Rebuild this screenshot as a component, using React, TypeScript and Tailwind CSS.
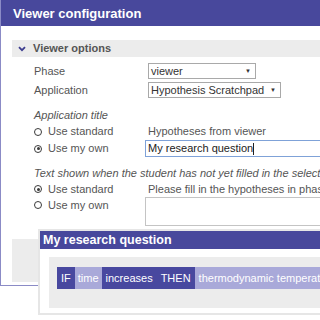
import React from "react";

const font = { fontFamily: '"Liberation Sans", Arial, sans-serif' };

function Radio({ checked }: { checked?: boolean }) {
  return (
    <span className="inline-flex w-[8px] h-[8px] rounded-full border-[1.5px] border-[#3a3a3a] items-center justify-center mr-[6px] shrink-0">
      {checked && <span className="block w-[3px] h-[3px] rounded-full bg-[#3a3a3a]" />}
    </span>
  );
}

export default function App() {
  return (
    <div className="relative w-[320px] h-[320px] overflow-hidden bg-white" style={font}>
      {/* main window */}
      <div className="w-[340px] h-[286px] border-l border-b border-[#8b8bc6] flex flex-col">
        <div className="h-[26px] bg-[#48489c] flex items-center pl-[12px] text-white font-bold text-[13px] leading-none">
          Viewer configuration
        </div>
        <div className="mt-[14px] ml-[11px] h-[17px] bg-[#ececec] flex items-center">
          <svg width="8" height="6" viewBox="0 0 8 6" className="ml-[6px]">
            <path d="M1 1.2 L4 4.2 L7 1.2" fill="none" stroke="#3d3d8f" strokeWidth="1.8" />
          </svg>
          <span className="ml-[7px] font-bold text-[11px] text-[#555]">Viewer options</span>
        </div>
        <div className="pl-[33px] text-[11px] text-[#555]">
          <div className="mt-[6px] h-[16px] flex items-center">
            <span className="w-[114px]">Phase</span>
            <div className="w-[108px] h-[16px] border border-[#a9a9a9] flex items-center justify-between pl-[2px] pr-[4px] text-[#333]">
              <span>viewer</span>
              <span className="text-[6px]">▼</span>
            </div>
          </div>
          <div className="mt-[3px] h-[16px] flex items-center">
            <span className="w-[114px]">Application</span>
            <div className="w-[133px] h-[16px] border border-[#a9a9a9] flex items-center justify-between pl-[2px] pr-[4px] text-[#333]">
              <span>Hypothesis Scratchpad</span>
              <span className="text-[6px]">▼</span>
            </div>
          </div>
          <div className="mt-[9px] h-[16px] leading-[16px] italic">Application title</div>
          <div className="h-[17px] flex items-center">
            <span className="w-[114px] flex items-center"><Radio />Use standard</span>
            <span>Hypotheses from viewer</span>
          </div>
          <div className="h-[17px] flex items-center">
            <span className="w-[114px] flex items-center"><Radio checked />Use my own</span>
            <div className="w-[200px] h-[17px] border border-[#7fa2d8] flex items-center pl-[2px] text-[#222]">
              My research question<span className="inline-block w-px h-[12px] bg-[#222]" />
            </div>
          </div>
          <div className="mt-[8px] h-[16px] leading-[16px] italic whitespace-nowrap">
            Text shown when the student has not yet filled in the selected phase
          </div>
          <div className="h-[16px] flex items-center whitespace-nowrap">
            <span className="w-[114px] flex items-center shrink-0"><Radio checked />Use standard</span>
            <span>Please fill in the hypotheses in phase viewer</span>
          </div>
          <div className="h-[29px] flex items-start">
            <span className="w-[114px] h-[16px] flex items-center"><Radio />Use my own</span>
            <div className="w-[200px] h-[29px] border border-[#c4c4c4]" />
          </div>
        </div>
        <div className="mt-[13px] ml-[11px] h-[43px] bg-[#ececec]" />
      </div>

      {/* dialog */}
      <div className="absolute left-[38px] top-[229px] w-[300px] border-2 border-[#e6e6e6] bg-white">
        <div className="h-[18px] bg-[#48489c] flex items-center pl-[3px] text-white font-bold text-[12.5px] leading-none">
          My research question
        </div>
        <div className="pt-[8px] pl-[9px] pb-[5px]">
          <div className="h-[51px] bg-[#ececec] pt-[10px] pl-[8px]">
            <div className="flex h-[22px] text-[11px] text-white whitespace-nowrap">
              <span className="bg-[#48489f] px-[4px] flex items-center">IF</span>
              <span className="bg-[#a9a9d9] px-[3px] flex items-center">time</span>
              <span className="bg-[#48489f] px-[4px] flex items-center">increases</span>
              <span className="bg-[#48489f] px-[4px] flex items-center">THEN</span>
              <span className="bg-[#a9a9d9] px-[4px] flex items-center">thermodynamic temperature</span>
            </div>
          </div>
        </div>
      </div>
    </div>
  );
}
